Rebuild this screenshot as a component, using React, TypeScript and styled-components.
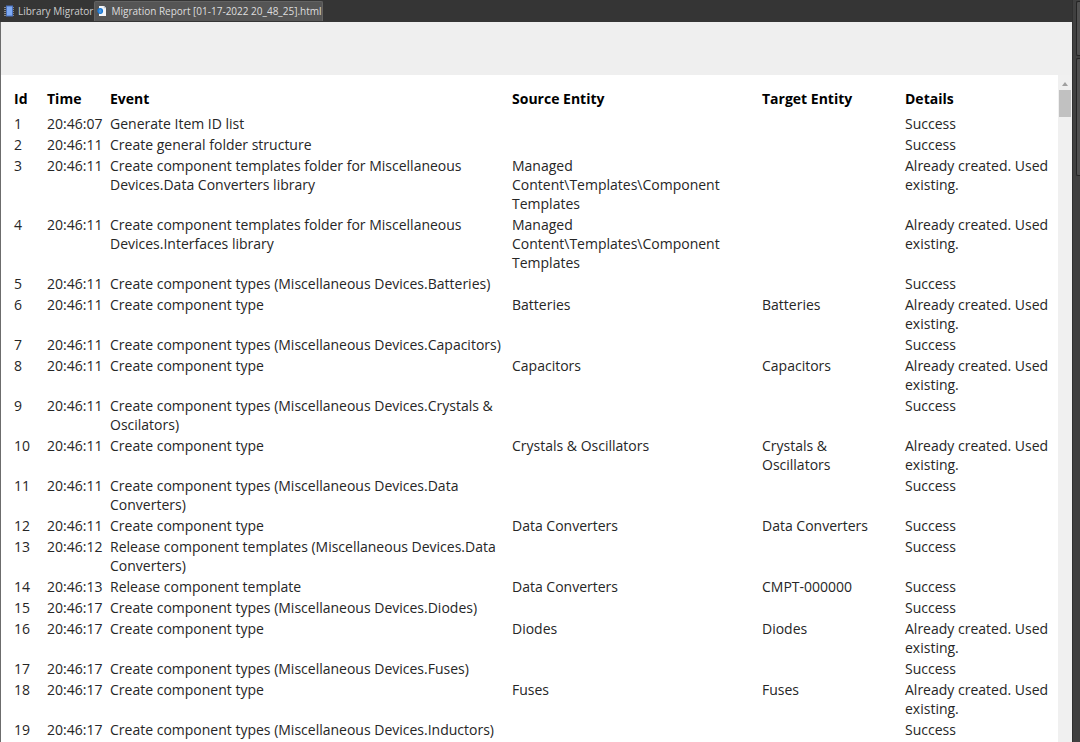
import React from "react";
import styled, { createGlobalStyle } from "styled-components";

const GlobalStyle = createGlobalStyle`
  * { box-sizing: border-box; }
  body {
    margin: 0;
    background: #404040;
    color: #262626;
    font-family: "Open Sans", "Noto Sans", sans-serif;
    font-size: 14px;
    line-height: 19px;
  }
`;

const Workspace = styled.div`
  display: flex;
  height: 100vh;
  overflow: hidden;
`;

const Main = styled.div`
  display: flex;
  flex: 1;
  flex-direction: column;
  min-width: 0;
`;

const TabBar = styled.div`
  display: flex;
  align-items: flex-start;
  height: 22px;
  padding-top: 1px;
  background: #353535;
`;

const Tab = styled.button<{ $active?: boolean }>`
  display: flex;
  align-items: center;
  gap: 3px;
  height: 20px;
  padding: 0 0 2px 2px;
  border: 1px solid ${(p) => (p.$active ? "#626262" : "transparent")};
  border-bottom: 0;
  border-radius: 2px 2px 0 0;
  background: ${(p) => (p.$active ? "#555555" : "transparent")};
  color: ${(p) => (p.$active ? "#dedede" : "#cccccc")};
  font: 10px/14px "Open Sans", "Noto Sans", sans-serif;
  white-space: nowrap;
`;

const Document = styled.div`
  display: flex;
  flex: 1;
  flex-direction: column;
  min-height: 0;
  border-left: 1px solid #6c6c6c;
  background: #ffffff;
`;

const Toolbar = styled.div`
  flex: none;
  height: 53px;
  background: #efefef;
`;

const Viewport = styled.div`
  display: flex;
  flex: 1;
  min-height: 0;
`;

const Report = styled.main`
  flex: 1;
  min-width: 0;
  overflow: hidden;
  padding: 11px 0 0 12px;
`;

const Table = styled.table`
  width: 100%;
  table-layout: fixed;
  border-collapse: collapse;
`;

const Col = styled.col<{ $width?: number }>`
  width: ${(p) => (p.$width ? `${p.$width}px` : "auto")};
`;

const HeadCell = styled.th`
  padding: 3px 10px 6px 1px;
  color: #000000;
  font-weight: 700;
  text-align: left;
`;

const Cell = styled.td<{ $nowrap?: boolean }>`
  padding: 0 10px 2px 1px;
  vertical-align: top;
  white-space: ${(p) => (p.$nowrap ? "nowrap" : "normal")};

  &:last-child {
    padding-right: 1px;
  }
`;

const ScrollTrack = styled.div`
  display: flex;
  flex: none;
  flex-direction: column;
  align-items: center;
  width: 14px;
  background: #f0f0f0;
`;

const ScrollUp = styled.button`
  display: flex;
  align-items: center;
  justify-content: center;
  width: 14px;
  height: 15px;
  padding: 2px 0 0;
  border: 0;
  background: transparent;
`;

const ScrollThumb = styled.div`
  width: 12px;
  height: 27px;
  background: #c1c1c1;
`;

const SidePanels = styled.aside`
  display: flex;
  flex: none;
  flex-direction: column;
  align-items: flex-end;
  gap: 2px;
  width: 8px;
  padding-top: 1px;
  border-left: 1px solid #303030;
  background: #404040;
`;

const PanelTab = styled.div<{ $height: number }>`
  width: 4px;
  height: ${(p) => p.$height}px;
  border: 1px solid #242424;
  border-right: 0;
  border-radius: 2px 0 0 2px;
  background: #505050;
`;

const LibraryIcon = () => (
  <svg width="12" height="12" viewBox="0 0 12 12" aria-hidden="true">
    <path d="M1 2.5h10M1 4.5h10M1 6.5h10M1 8.5h10M1 10.5h10" stroke="#858585" />
    <rect x="3.5" y="1" width="6" height="10" fill="#7fabf5" stroke="#4a70bd" />
  </svg>
);

const PageIcon = () => (
  <svg width="11" height="12" viewBox="0 0 11 12" aria-hidden="true">
    <path d="M2 1h5l2 2v8H2z" fill="#f3f5f8" />
    <path d="M7 1v2h2" fill="#b9c4d3" stroke="#b9c4d3" strokeWidth=".5" />
    <circle cx="3.2" cy="6" r="2.2" fill="#7db4ec" stroke="#1876d2" strokeWidth="1.4" />
    <path d="M1.8 6h3.5" stroke="#1876d2" />
  </svg>
);

const columns: { title: string; width?: number }[] = [
  { title: "Id", width: 33 },
  { title: "Time", width: 63 },
  { title: "Event" },
  { title: "Source Entity", width: 250 },
  { title: "Target Entity", width: 143 },
  { title: "Details", width: 154 },
];

const OK = "Success";
const EXISTING = "Already created. Used existing.";
const TYPE = "Create component type";
const TEMPLATES = "Managed Content\\Templates\\Component Templates";

// time, event, source entity, target entity, details
const events: string[][] = [
  ["20:46:07", "Generate Item ID list", "", "", OK],
  ["20:46:11", "Create general folder structure", "", "", OK],
  ["20:46:11", "Create component templates folder for Miscellaneous Devices.Data Converters library", TEMPLATES, "", EXISTING],
  ["20:46:11", "Create component templates folder for Miscellaneous Devices.Interfaces library", TEMPLATES, "", EXISTING],
  ["20:46:11", "Create component types (Miscellaneous Devices.Batteries)", "", "", OK],
  ["20:46:11", TYPE, "Batteries", "Batteries", EXISTING],
  ["20:46:11", "Create component types (Miscellaneous Devices.Capacitors)", "", "", OK],
  ["20:46:11", TYPE, "Capacitors", "Capacitors", EXISTING],
  ["20:46:11", "Create component types (Miscellaneous Devices.Crystals & Oscilators)", "", "", OK],
  ["20:46:11", TYPE, "Crystals & Oscillators", "Crystals & Oscillators", EXISTING],
  ["20:46:11", "Create component types (Miscellaneous Devices.Data Converters)", "", "", OK],
  ["20:46:11", TYPE, "Data Converters", "Data Converters", OK],
  ["20:46:12", "Release component templates (Miscellaneous Devices.Data Converters)", "", "", OK],
  ["20:46:13", "Release component template", "Data Converters", "CMPT-000000", OK],
  ["20:46:17", "Create component types (Miscellaneous Devices.Diodes)", "", "", OK],
  ["20:46:17", TYPE, "Diodes", "Diodes", EXISTING],
  ["20:46:17", "Create component types (Miscellaneous Devices.Fuses)", "", "", OK],
  ["20:46:17", TYPE, "Fuses", "Fuses", EXISTING],
  ["20:46:17", "Create component types (Miscellaneous Devices.Inductors)", "", "", OK],
];

export default function App() {
  return (
    <>
      <GlobalStyle />
      <Workspace>
        <Main>
          <TabBar>
            <Tab><LibraryIcon />Library Migrator</Tab>
            <Tab $active><PageIcon />Migration Report [01-17-2022 20_48_25].html</Tab>
          </TabBar>
          <Document>
            <Toolbar />
            <Viewport>
              <Report>
                <Table>
                  <colgroup>
                    {columns.map((c) => <Col key={c.title} $width={c.width} />)}
                  </colgroup>
                  <thead>
                    <tr>
                      {columns.map((c) => <HeadCell key={c.title} scope="col">{c.title}</HeadCell>)}
                    </tr>
                  </thead>
                  <tbody>
                    {events.map((row, i) => (
                      <tr key={i}>
                        <Cell>{i + 1}</Cell>
                        {row.map((text, j) => <Cell key={j} $nowrap={j === 0}>{text}</Cell>)}
                      </tr>
                    ))}
                  </tbody>
                </Table>
              </Report>
              <ScrollTrack>
                <ScrollUp aria-label="Scroll up">
                  <svg width="6" height="4" viewBox="0 0 6 4"><path d="M3 0l3 4H0z" fill="#a0a0a0" /></svg>
                </ScrollUp>
                <ScrollThumb />
              </ScrollTrack>
            </Viewport>
          </Document>
        </Main>
        <SidePanels>
          <PanelTab $height={55} />
          <PanelTab $height={118} />
        </SidePanels>
      </Workspace>
    </>
  );
}
